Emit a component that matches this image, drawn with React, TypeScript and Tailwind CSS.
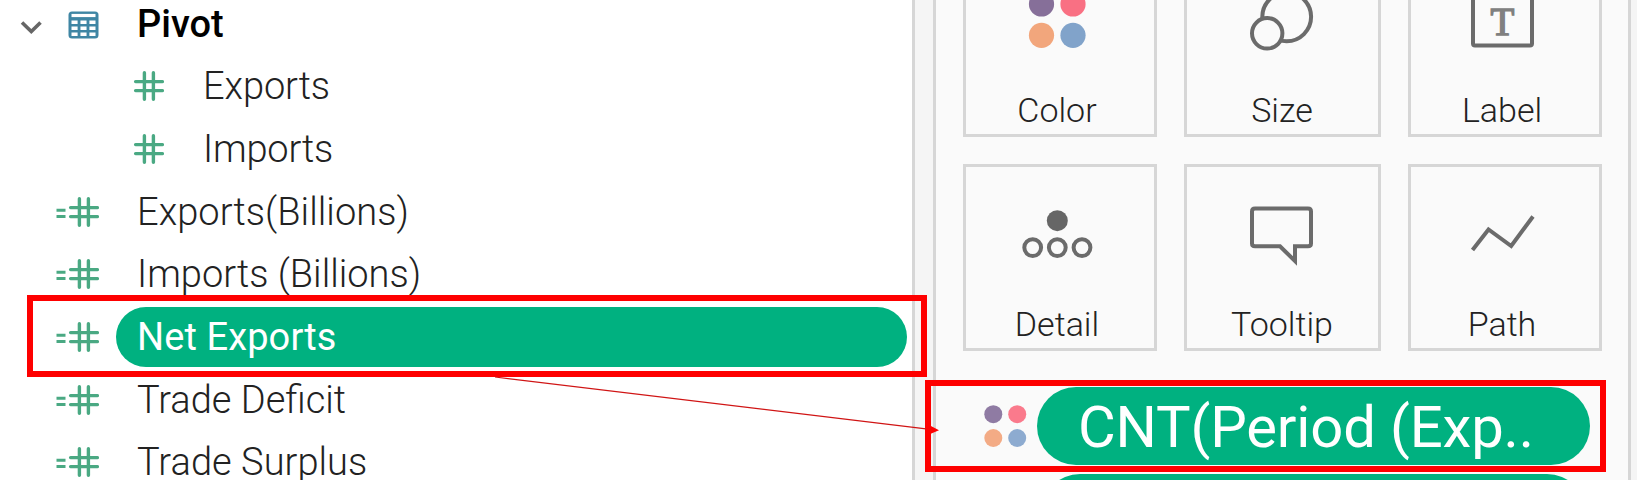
import type { ReactNode } from "react";

function Hash() {
  return (
    <g stroke="#4aa983" strokeWidth="3.4" strokeLinecap="round" fill="none">
      <path d="M24.4 1.8V28.2M33.4 1.8V28.2M15.6 10.6H42.4M15.6 19.6H42.4" />
    </g>
  );
}

function FieldIcon({ calculated = false }: { calculated?: boolean }) {
  return (
    <svg className="h-[30px] w-[44px] shrink-0" viewBox="0 0 44 30">
      <Hash />
      {calculated && <path d="M1.5 13.2H10.5M1.5 19.4H10.5" stroke="#4aa983" strokeWidth="3" />}
    </svg>
  );
}

type Field = { name: string; nested?: boolean; selected?: boolean; tracking: string };

const fields: Field[] = [
  { name: "Exports", nested: true, tracking: "tracking-[-0.1px]" },
  { name: "Imports", nested: true, tracking: "tracking-[-0.2px]" },
  { name: "Exports(Billions)", tracking: "tracking-[0.05px]" },
  { name: "Imports (Billions)", tracking: "tracking-[0px]" },
  { name: "Net Exports", selected: true, tracking: "tracking-[0.1px]" },
  { name: "Trade Deficit", tracking: "tracking-[0px]" },
  { name: "Trade Surplus", tracking: "tracking-[0.05px]" },
];

function FieldRow({ field }: { field: Field }) {
  const { name, nested, selected, tracking } = field;
  return (
    <div className={`flex h-[62.67px] items-center ${nested ? "pl-[120px]" : "pl-[55px]"}`}>
      <FieldIcon calculated={!nested} />
      <div
        className={`flex h-[60px] items-center whitespace-pre text-[38px] leading-none ${tracking} ${
          nested ? "ml-[39px]" : "ml-[17px] w-[791px] rounded-full pl-[21px]"
        } ${selected ? "bg-[#00b180] text-white" : "font-[350] text-[#222]"}`}
      >
        {name}
      </div>
    </div>
  );
}

function DataPane() {
  return (
    <section className="h-full w-[912px] shrink-0 bg-white">
      <div className="-mt-[7.7px] flex flex-col">
        <div className="flex h-[62.67px] items-center pl-[20px]">
          <svg className="mt-[6px] h-[16px] w-[22px] shrink-0" viewBox="0 0 22 16">
            <path d="M2 3.5L11.3 12.5L20.5 3.5" fill="none" stroke="#666" strokeWidth="3.6" />
          </svg>
          <svg className="ml-[26px] mt-[3px] h-[28px] w-[31px] shrink-0" viewBox="0 0 31 28">
            <rect x="0.5" y="0.5" width="30" height="27" rx="3.5" fill="#3f86a4" />
            <path d="M3.5 4.5H27.5" stroke="#fff" strokeWidth="3.2" />
            <path d="M3.5 11.3H27.5M3.5 17.3H27.5M3.5 23.3H27.5" stroke="#fff" strokeWidth="3.4" strokeDasharray="6.1 2.85" />
          </svg>
          <span className="ml-[38px] text-[38px] font-medium leading-none text-black">Pivot</span>
        </div>
        {fields.map((field) => (
          <FieldRow key={field.name} field={field} />
        ))}
      </div>
    </section>
  );
}

function Card({ label, className, children }: { label: string; className: string; children: ReactNode }) {
  return (
    <div className={`flex h-[187px] flex-col items-center border-[3px] border-[#d6d6d6] pt-[23px] ${className}`}>
      <svg className="h-[80px] w-[80px] shrink-0" viewBox="0 0 80 80" fill="none" stroke="#6b6b6b" strokeWidth="4">
        {children}
      </svg>
      <span className="mt-[34px] text-[34px] font-[350] leading-[40px] text-[#222]">{label}</span>
    </div>
  );
}

function MarksGrid() {
  return (
    <div className="-mt-[50px] grid grid-cols-[194px_197px_194px] gap-[27px] pl-[27px]">
      <Card label="Color" className="pr-[6px]">
        <g stroke="none">
          <circle cx="24.5" cy="28" r="12.6" fill="#866f99" />
          <circle cx="56" cy="28" r="12.6" fill="#f97083" />
          <circle cx="24.5" cy="59.3" r="12.6" fill="#f2a67c" />
          <circle cx="56" cy="59.3" r="12.6" fill="#81a3ca" />
        </g>
      </Card>
      <Card label="Size" className="pr-[1px]">
        <circle cx="44.7" cy="40.8" r="24.4" />
        <circle cx="25.2" cy="57.3" r="15.2" fill="#fafafa" />
      </Card>
      <Card label="Label" className="pr-[6px]">
        <rect x="11" y="11" width="59" height="58.5" rx="2" />
        <text x="40.5" y="58.5" textAnchor="middle" fontFamily="Liberation Serif" fontSize="39" fill="#808080" stroke="#808080" strokeWidth="1.4">
          T
        </text>
      </Card>
      <Card label="Detail" className="pr-[6px]">
        <circle cx="40.3" cy="30.7" r="10.5" fill="#666" stroke="none" />
        <circle cx="15.7" cy="57.6" r="8.4" />
        <circle cx="40.3" cy="57.6" r="8.4" />
        <circle cx="65" cy="57.6" r="8.4" />
      </Card>
      <Card label="Tooltip" className="pr-[1px]">
        <path d="M13 18.5H66Q69 18.5 69 21.5V53.5Q69 56.3 66 56.3H53V71L38 56.3H13Q10 56.3 10 53.5V21.5Q10 18.5 13 18.5Z" />
      </Card>
      <Card label="Path" className="pr-[6px]">
        <path d="M10.5 60L26.5 39.5L49.2 56L71 26.5" />
      </Card>
    </div>
  );
}

function MarkPill() {
  return (
    <div className="mt-[36px] flex h-[78px] items-center pl-[48px]">
      <svg className="h-[44px] w-[44px] shrink-0" viewBox="0 0 44 44">
        <circle cx="9.3" cy="10.2" r="9" fill="#8f7ba3" />
        <circle cx="33.2" cy="10.2" r="9" fill="#fa7a8c" />
        <circle cx="9.3" cy="34" r="9" fill="#f3ab85" />
        <circle cx="33.2" cy="34" r="9" fill="#8dabd0" />
      </svg>
      <div className="ml-[9px] flex h-[78px] w-[553px] items-center rounded-full bg-[#00b180] pl-[41px] pt-[2px] text-[58px] leading-none tracking-[-0.15px] text-white">
        CNT(Period (Exp..
      </div>
    </div>
  );
}

export default function App() {
  return (
    <main className="relative flex h-[480px] w-[1637px] overflow-hidden bg-[#f5f5f5] font-['Roboto',sans-serif]">
      <DataPane />
      <div className="w-[24px] shrink-0 border-x-[3px] border-[#d6d6d6] bg-[#f5f5f5]" />
      <section className="h-full w-[695px] shrink-0 border-r-[3px] border-[#d6d6d6] bg-[#fafafa]">
        <MarksGrid />
        <MarkPill />
        <div className="ml-[105px] mt-[9px] h-[78px] w-[545px] rounded-full bg-[#00b180]" />
      </section>
      <div className="absolute left-[27px] top-[295px] h-[82px] w-[900px] border-[6px] border-[#fe0000]" />
      <div className="absolute left-[925px] top-[380px] h-[92px] w-[681px] border-[6px] border-[#fe0000]" />
      <svg className="absolute left-0 top-0 h-[480px] w-[1637px]" viewBox="0 0 1637 480">
        <path d="M495 377L926 428.8" stroke="#d01414" strokeWidth="1.2" />
        <path d="M930 425.5L939 430.3L929 434.5Z" fill="#fe0000" />
      </svg>
    </main>
  );
}
